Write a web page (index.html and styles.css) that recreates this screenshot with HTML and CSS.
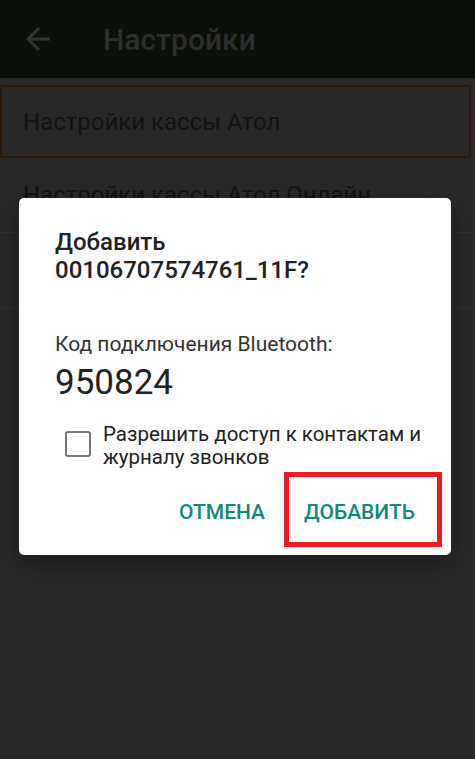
FILE: index.html
```html
<!DOCTYPE html>
<html lang="ru">

<head>
    <meta charset="UTF-8">
    <meta name="viewport" content="width=device-width, initial-scale=1.0">
    <title>Настройки</title>
    <link rel="stylesheet" href="styles.css">
</head>

<body>
    <header class="app-bar">
        <svg class="back-icon" viewBox="0 0 24 24" width="36" height="36">
            <path d="M20 11H7.83l5.59-5.59L12 4l-8 8 8 8 1.41-1.41L7.83 13H20v-2z" />
        </svg>
        <h1 class="app-title">Настройки</h1>
    </header>

    <main class="settings-list">
        <div class="settings-item selected">Настройки кассы Атол</div>
        <div class="settings-item">Настройки кассы Атол Онлайн</div>
        <div class="settings-item"></div>
    </main>

    <div class="dialog">
        <h2 class="dialog-title">Добавить<br>00106707574761_11F?</h2>
        <p class="pair-label">Код подключения Bluetooth:</p>
        <p class="pair-code">950824</p>
        <label class="check-row">
            <span class="check-box"></span>
            <span class="check-text">Разрешить доступ к контактам и журналу звонков</span>
        </label>
        <div class="dialog-actions">
            <button class="dialog-btn">ОТМЕНА</button>
            <button class="dialog-btn">ДОБАВИТЬ</button>
        </div>
        <div class="highlight"></div>
    </div>
</body>

</html>
```

FILE: styles.css
```css
/* Global */
* {
    box-sizing: border-box;
    font-family: Roboto, "Noto Sans", sans-serif;
}

body {
    margin: 0;
    width: 475px;
    height: 759px;
    overflow: hidden;
    position: relative;
    background-color: #292929;
}

/* App bar (dimmed) */
.app-bar {
    height: 78px;
    background-color: #0a0f07;
    display: flex;
    align-items: center;
}

.back-icon {
    margin-left: 20px;
    fill: #363636;
}

.app-title {
    margin: 0 0 0 47px;
    font-size: 30px;
    font-weight: 500;
    color: #2f2f2f;
}

/* Settings list (dimmed) */
.settings-list {
    padding-top: 7px;
}

.settings-item {
    height: 75px;
    padding-left: 23px;
    display: flex;
    align-items: center;
    font-size: 24px;
    color: #121212;
    border-bottom: 1px solid #313131;
}

.settings-item.selected {
    height: 73px;
    margin-right: 4px;
    padding-left: 21px;
    border: 2px solid #2c1a06;
    border-radius: 3px;
}

/* Dialog */
.dialog {
    position: absolute;
    left: 19px;
    top: 198px;
    width: 432px;
    height: 357px;
    padding: 30px 36px 0;
    background-color: white;
    border-radius: 5px;
    box-shadow: 0 8px 22px rgba(0, 0, 0, 0.35);
}

.dialog-title {
    margin: 0;
    font-size: 24px;
    font-weight: 500;
    line-height: 28px;
    color: #212121;
}

.pair-label {
    margin: 48px 0 0;
    font-size: 21px;
    line-height: 25px;
    color: #333333;
}

.pair-code {
    margin: 6px 0 0;
    font-size: 35px;
    line-height: 40px;
    color: #212121;
}

.check-row {
    display: flex;
    align-items: flex-start;
    margin: 20px -14px 0 0;
    padding-left: 10px;
}

.check-box {
    flex: none;
    width: 26px;
    height: 26px;
    margin-top: 8px;
    border: 2.5px solid #757575;
    border-radius: 3px;
}

.check-text {
    margin-left: 12px;
    font-size: 20.5px;
    line-height: 23px;
    color: #212121;
}

.dialog-actions {
    display: flex;
    justify-content: flex-end;
    gap: 39px;
    margin-top: 31px;
}

.dialog-btn {
    padding: 0;
    border: none;
    background: none;
    font-size: 21px;
    font-weight: 500;
    color: #0f8a7b;
}

/* Red annotation frame */
.highlight {
    position: absolute;
    left: 265px;
    top: 274px;
    width: 158px;
    height: 75px;
    border: 5px solid #ed1c24;
}
```
